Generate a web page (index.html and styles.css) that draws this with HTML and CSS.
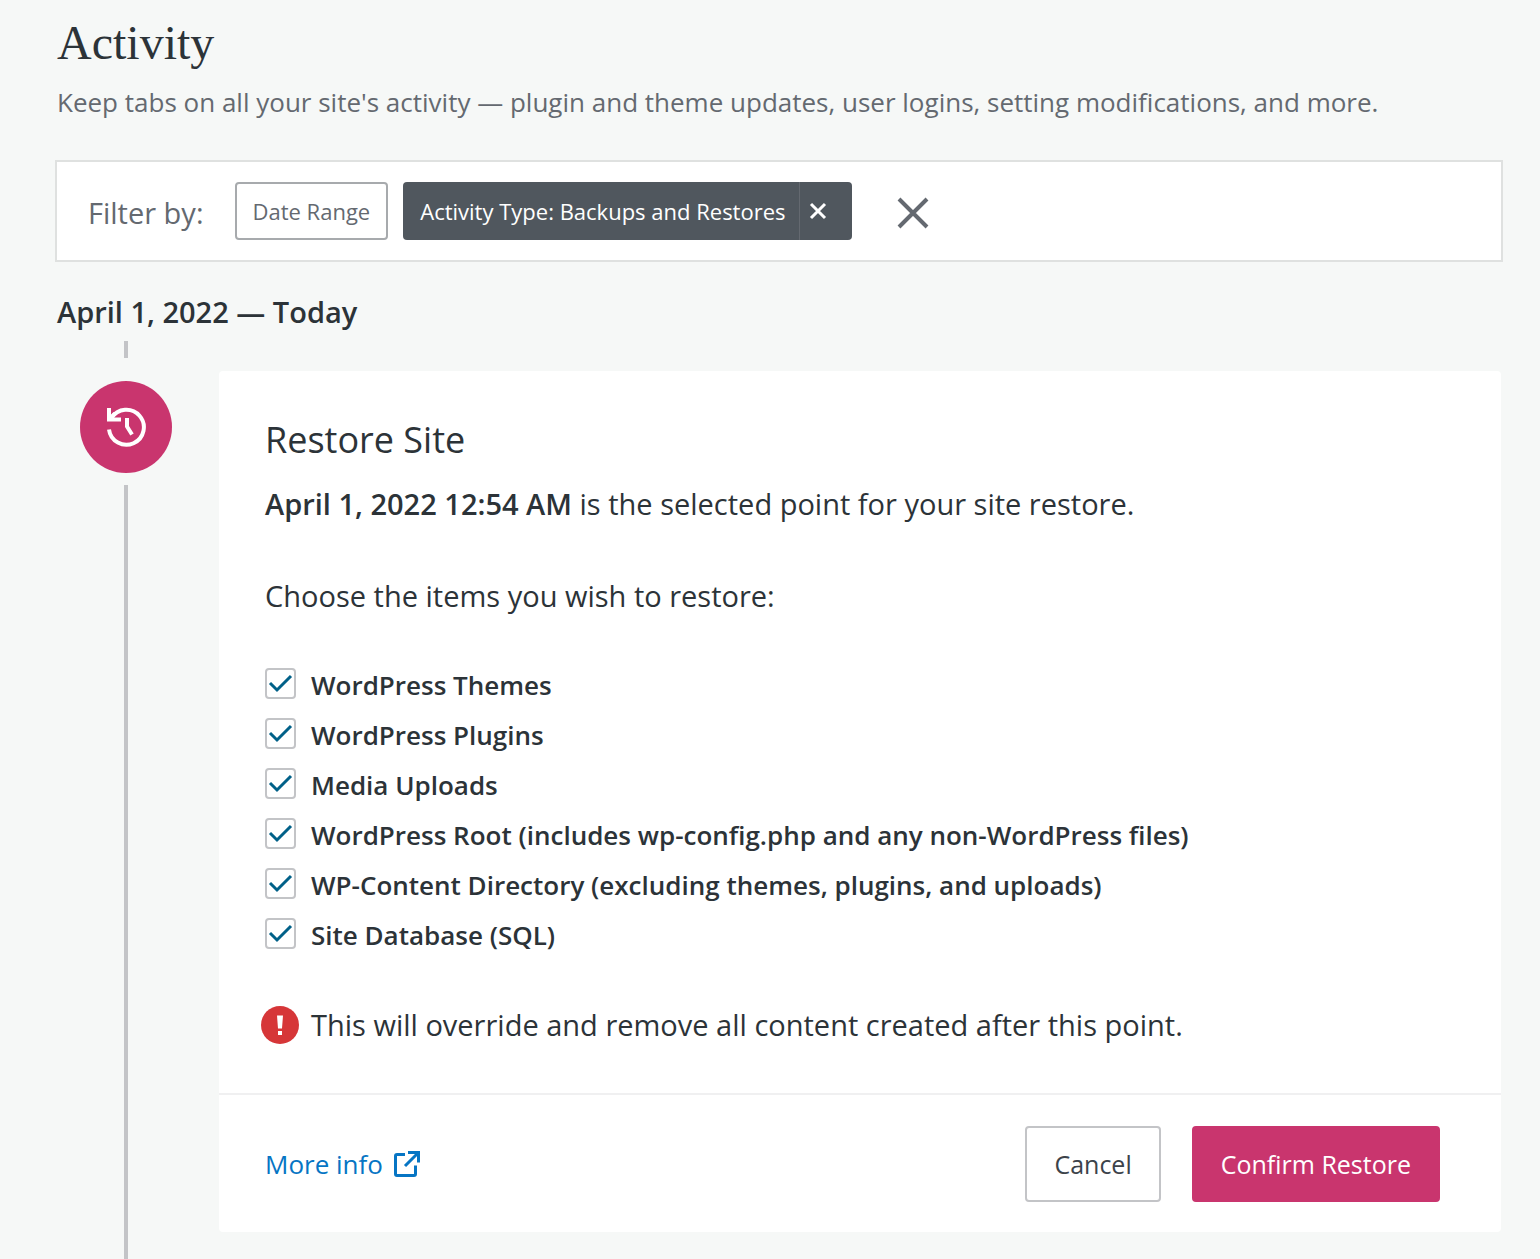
FILE: index.html
```html
<!DOCTYPE html>
<html lang="en">
<head>
  <meta charset="UTF-8" />
  <meta name="viewport" content="width=device-width, initial-scale=1.0"/>
  <title>Activity</title>
  <link rel="stylesheet" href="styles.css">
</head>
<body>
  <main class="page">
    <header class="page-header">
      <h1>Activity</h1>
      <p>Keep tabs on all your site's activity — plugin and theme updates, user logins, setting modifications, and more.</p>
    </header>

    <section class="filterbar" aria-label="Filters">
      <span class="filterbar-label">Filter by:</span>
      <button type="button" class="filter-btn">Date Range</button>
      <div class="filter-active">
        <button type="button" class="filter-active-name">Activity Type: Backups and Restores</button>
        <button type="button" class="filter-active-clear" aria-label="Clear activity type">
          <svg width="18" height="18" viewBox="0 0 18 18"><path d="M2 2l14 14M16 2L2 16" stroke="currentColor" stroke-width="3" fill="none"/></svg>
        </button>
      </div>
      <button type="button" class="filter-reset" aria-label="Clear all filters">
        <svg width="32" height="32" viewBox="0 0 32 32"><path d="M2 2l28 28M30 2L2 30" stroke="currentColor" stroke-width="4" fill="none"/></svg>
      </button>
    </section>

    <h2 class="day-title">April 1, 2022 — Today</h2>

    <section class="activity">
      <div class="timeline">
        <span class="timeline-stub"></span>
        <span class="timeline-icon">
          <svg width="42" height="42" viewBox="0 0 42 42" fill="none" stroke="#fff" stroke-width="4">
            <path d="M4 23.500A17.500 17.500 0 1 0 6.500 12"/>
            <path d="M4 2V13.500H16"/>
            <path d="M4.500 13L10 7.500"/>
            <path d="M22 12V20.500L27 28.500"/>
          </svg>
        </span>
        <span class="timeline-line"></span>
      </div>

      <form class="card">
        <div class="card-body">
          <h3>Restore Site</h3>
          <p class="restore-point"><strong>April 1, 2022 12:54 AM</strong> is the selected point for your site restore.</p>
          <p class="restore-choose">Choose the items you wish to restore:</p>

          <div class="options">
            <label class="option"><input type="checkbox" name="themes" checked><span>WordPress Themes</span></label>
            <label class="option"><input type="checkbox" name="plugins" checked><span>WordPress Plugins</span></label>
            <label class="option"><input type="checkbox" name="uploads" checked><span>Media Uploads</span></label>
            <label class="option"><input type="checkbox" name="roots" checked><span>WordPress Root (includes wp-config.php and any non-WordPress files)</span></label>
            <label class="option"><input type="checkbox" name="contents" checked><span>WP-Content Directory (excluding themes, plugins, and uploads)</span></label>
            <label class="option"><input type="checkbox" name="sqls" checked><span>Site Database (SQL)</span></label>
          </div>

          <p class="warning">
            <svg width="38" height="38" viewBox="0 0 38 38">
              <circle cx="19" cy="19" r="19" fill="#d63638"/>
              <path d="M16 9.500h6l-1 13h-4zM17 25h4v4h-4z" fill="#fff"/>
            </svg>
            <span>This will override and remove all content created after this point.</span>
          </p>
        </div>

        <div class="card-footer">
          <a href="#" class="more-info">More info
            <svg width="28" height="28" viewBox="0 0 28 28" fill="none" stroke="currentColor" stroke-width="3">
              <path d="M12 4.500H4A1.500 1.500 0 0 0 2.500 6V24A1.500 1.500 0 0 0 4 25.500H21A1.500 1.500 0 0 0 22.500 24V15.500"/>
              <path d="M15 2.500H25.500V12.500M25.500 2.500L12 16"/>
            </svg>
          </a>
          <button type="button" class="btn">Cancel</button>
          <button type="submit" class="btn btn-primary">Confirm Restore</button>
        </div>
      </form>
    </section>
  </main>
</body>
</html>
```

FILE: styles.css
```css
* {
  box-sizing: border-box;
}
body {
  margin: 0;
  background: #f6f8f7;
  color: #2c3338;
  font-family: "Open Sans", "Noto Sans", sans-serif;
  font-size: 29px;
  line-height: 44px;
}
h1, h2, h3, p {
  margin: 0;
}
button {
  font-family: inherit;
  cursor: pointer;
}
svg {
  display: block;
  flex-shrink: 0;
}
.page {
  display: flex;
  flex-direction: column;
  min-height: 100vh;
  padding: 15px 37px 0 55px;
}

/* header */
.page-header {
  padding-left: 2px;
  margin-bottom: 38px;
}
.page-header h1 {
  font-family: "Liberation Serif", serif;
  font-size: 48px;
  font-weight: 400;
  line-height: 56px;
  margin-bottom: 11px;
}
.page-header p {
  color: #646970;
  font-size: 26px;
  line-height: 40px;
}

/* filter bar */
.filterbar {
  display: flex;
  align-items: center;
  padding: 20px 31px;
  background: #fff;
  border: 2px solid #dfe1e0;
}
.filterbar-label {
  color: #646970;
  margin: 4px 31px 0 0;
}
.filter-btn {
  height: 58px;
  padding: 0 16px;
  margin-right: 15px;
  background: #fff;
  border: 2px solid #a7aaad;
  border-radius: 4px;
  color: #646970;
  font-size: 22px;
}
.filter-active {
  display: flex;
  height: 58px;
  background: #50575e;
  border-radius: 4px;
}
.filter-active button {
  background: none;
  border: 0;
  color: #fff;
  font-size: 22px;
}
.filter-active .filter-active-name {
  padding: 0 13px 0 17px;
}
.filter-active .filter-active-clear {
  padding: 0 25px 0 9px;
  border-left: 1px solid #646970;
}
.filter-reset {
  padding: 0;
  margin: 4px 0 0 45px;
  background: none;
  border: 0;
  color: #646970;
}

/* timeline */
.day-title {
  padding-left: 2px;
  margin: 28px 0 7px;
  font-size: 29px;
  font-weight: 600;
}
.activity {
  display: flex;
  flex: 1;
  gap: 22px;
}
.timeline {
  display: flex;
  flex-direction: column;
  align-items: center;
  width: 142px;
  flex-shrink: 0;
}
.timeline-stub,
.timeline-line {
  width: 4px;
  background: #c3c4c7;
}
.timeline-stub {
  height: 17px;
}
.timeline-icon {
  display: flex;
  align-items: center;
  justify-content: center;
  width: 92px;
  height: 92px;
  margin: 23px 0 12px;
  border-radius: 50%;
  background: #c9356e;
}
.timeline-line {
  flex: 1;
}

/* restore card */
.card {
  flex: 1;
  align-self: flex-start;
  margin: 30px 2px 26px 0;
  background: #fff;
  border-radius: 4px;
}
.card-body {
  padding: 43px 46px 46px;
}
.card h3 {
  font-size: 36px;
  font-weight: 400;
  line-height: 52px;
  margin-bottom: 16px;
}
.card strong {
  font-weight: 600;
}
.restore-choose {
  margin-top: 48px;
}
.options {
  display: flex;
  flex-direction: column;
  gap: 10px;
  margin: 47px 0 48px;
}
.option {
  display: flex;
  align-items: flex-start;
  gap: 15px;
  font-size: 26px;
  font-weight: 600;
  line-height: 40px;
}
.option input {
  appearance: none;
  flex-shrink: 0;
  width: 31px;
  height: 31px;
  margin: 3px 0 0;
  border: 2px solid #c3c4c7;
  border-radius: 4px;
  background: #fff;
}
.option input:checked {
  background: #fff url("data:image/svg+xml,%3Csvg xmlns='http://www.w3.org/2000/svg' viewBox='0 0 27 27'%3E%3Cpath d='M3 13L10 20L24 6' fill='none' stroke='%23006088' stroke-width='3'/%3E%3C/svg%3E") center / 27px no-repeat;
}
.warning {
  display: flex;
  align-items: center;
  gap: 12px;
  margin-left: -4px;
}
.card-footer {
  display: flex;
  align-items: center;
  gap: 31px;
  padding: 31px 61px 30px 46px;
  border-top: 2px solid #f0f0f1;
}
.more-info {
  display: flex;
  align-items: center;
  gap: 10px;
  margin-right: auto;
  color: #0675c4;
  font-size: 26px;
  text-decoration: none;
}
.btn {
  height: 76px;
  padding: 0 27px;
  background: #fff;
  border: 2px solid #c3c4c7;
  border-radius: 4px;
  color: #3c434a;
  font-size: 25px;
}
.btn-primary {
  background: #c9356e;
  border-color: #c9356e;
  color: #fff;
}
```
